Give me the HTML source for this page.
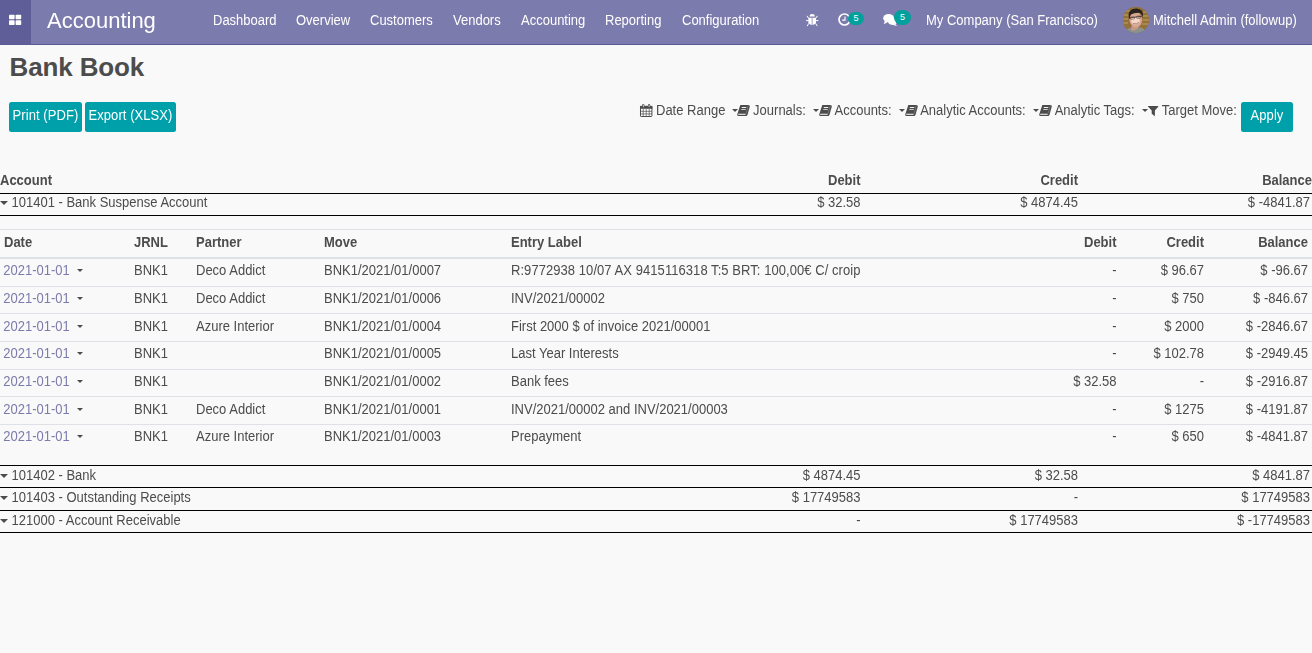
<!DOCTYPE html>
<html><head><meta charset="utf-8"><title>Bank Book</title>
<style>
*{box-sizing:border-box}
html,body{margin:0;padding:0}
body{width:1312px;height:653px;overflow:hidden;background:#f9f9f9;font-family:"Liberation Sans",sans-serif;font-size:13px;color:#4c4c4c;position:relative}
.nav{position:absolute;left:0;top:0;width:1312px;height:45px;background:#7c7bad;border-bottom:1px solid #5b5996;color:#fff}
.apps{position:absolute;left:0;top:0;width:31px;height:44px;background:#605e98}
.nav span.t{position:absolute;white-space:nowrap;color:#fff}
.brand{left:47px;top:8px;font-size:22px;line-height:26px;transform:scaleY(1.035);transform-origin:0 20px}
.mi{top:13px;font-size:13px;line-height:16px;transform:scaleY(1.08);transform-origin:0 12px}
h1{position:absolute;left:9.6px;top:51px;margin:0;font-size:26px;line-height:32px;font-weight:bold;color:#4c4c4c;letter-spacing:-0.15px}
.btn{position:absolute;background:#00a0ab;color:#fff;border-radius:2.5px;font-size:13px;line-height:16px;text-align:center;white-space:nowrap}
.t13{position:absolute;font-size:13px;line-height:16px;white-space:nowrap;color:#4c4c4c;transform:scaleY(1.08);transform-origin:0 12px}
.bt{display:inline-block;letter-spacing:0.07px;transform:scaleY(1.08);transform-origin:0 12px}
.b{font-weight:bold}
.r{text-align:right}
.hl{position:absolute;left:0;width:1312px;height:1px;background:#000}
.gl{position:absolute;left:0;width:1312px;background:#dee2e6}
.lk{color:#7c7bad}
.car{position:absolute;width:0;height:0;border-left:3px solid transparent;border-right:3px solid transparent;border-top:3px solid #4c4c4c}
.carb{position:absolute;width:0;height:0;border-left:4.1px solid transparent;border-right:4.1px solid transparent;border-top:4.6px solid #4c4c4c}
.badge{position:absolute;background:#00a09d;color:#fff;border-radius:8px;text-align:center;font-weight:normal}
svg{position:absolute;overflow:visible}
</style></head><body>
<div class="nav">
 <div class="apps"><svg width="31" height="44" viewBox="0 0 31 44"><g fill="#fff"><rect x="9" y="14.7" width="5.6" height="4.6" rx="0.7"/><rect x="15.6" y="14.7" width="5.6" height="4.6" rx="0.7"/><rect x="9" y="20.3" width="5.6" height="4.6" rx="0.7"/><rect x="15.6" y="20.3" width="5.6" height="4.6" rx="0.7"/></g></svg></div>
 <span class="t brand">Accounting</span>
 <span class="t mi" style="left:213px">Dashboard</span>
 <span class="t mi" style="left:296px">Overview</span>
 <span class="t mi" style="left:370px">Customers</span>
 <span class="t mi" style="left:453px">Vendors</span>
 <span class="t mi" style="left:521px">Accounting</span>
 <span class="t mi" style="left:605px">Reporting</span>
 <span class="t mi" style="left:682px">Configuration</span>
 <span class="t mi" style="left:926px">My Company (San Francisco)</span>
 <span class="t mi" style="left:1153px">Mitchell Admin (followup)</span>

 <svg style="left:805.8px;top:13.8px" width="12.4" height="12.4" viewBox="0 0 12.4 12.4"><g fill="#fff" stroke="none"><path d="M3.6 2.4 A2.55 2.3 0 0 1 8.8 2.4 Z"/><path d="M2.4 3.7 H5.75 V11 Q3.3 10.9 2.4 8.6 Z"/><path d="M6.45 3.7 H10 V8.6 Q9.1 10.9 6.45 11 Z"/></g><g stroke="#fff" stroke-width="1" stroke-linecap="round" fill="none"><path d="M2.6 4.3 L1.2 2.2"/><path d="M9.8 4.3 L11.2 2.2"/><path d="M0.4 6.6 H2.6"/><path d="M9.8 6.6 H12"/><path d="M2.7 9.6 L1.3 11.8"/><path d="M9.7 9.6 L11.1 11.8"/></g></svg>
 <svg style="left:837.6px;top:12.9px" width="13" height="13" viewBox="0 0 13 13"><circle cx="6.5" cy="6.5" r="5.5" fill="none" stroke="#fff" stroke-width="1.7"/><path d="M7 3.6 V7.1 H4.2" fill="none" stroke="#fff" stroke-width="1.1"/></svg>
 <div class="badge" style="left:848px;top:11.6px;width:16px;height:13.4px;font-size:9px;line-height:12px">5</div>
 <svg style="left:883.4px;top:13.8px" width="14.6" height="12.2" viewBox="0 0 14.6 12.2"><g fill="#fff"><ellipse cx="5.6" cy="4.2" rx="5.4" ry="4.1"/><path d="M1.6 6.3 Q2 8.6 0.6 9.9 Q3.2 9.6 4.6 7.9 Z"/><ellipse cx="9.6" cy="7.6" rx="4.4" ry="3.3" /><path d="M12.2 9.6 Q12.4 11 14.2 12 Q11.4 11.9 9.8 10.6 Z"/></g></svg>
 <div class="badge" style="left:894.2px;top:9.9px;width:16.6px;height:15px;font-size:9px;line-height:14px">5</div>
<svg style="left:1123px;top:6.8px" width="26" height="26" viewBox="0 0 26 26"><defs><clipPath id="av"><circle cx="13" cy="13" r="13"/></clipPath><filter id="bl" x="-20%" y="-20%" width="140%" height="140%"><feGaussianBlur stdDeviation="0.6"/></filter></defs><g clip-path="url(#av)"><rect width="26" height="26" fill="#8f6a35"/><g filter="url(#bl)"><rect x="-2" y="-2" width="30" height="30" fill="#94703a"/><g fill="#c2a060"><rect x="-2" y="7.5" width="8" height="1" /><rect x="-2" y="11.5" width="7" height="1"/><rect x="-2" y="15.5" width="7" height="1"/><rect x="19" y="8.5" width="9" height="1"/><rect x="19.5" y="12.5" width="9" height="1"/><rect x="19" y="16.5" width="9" height="1"/><rect x="20" y="4.5" width="6" height="1"/><rect x="2" y="3.5" width="5" height="1"/></g><path d="M3 28 V23 Q6 20.5 9 20.5 L18 20.5 Q21 21.5 23 24 V28 Z" fill="#8c928c"/><path d="M8.5 19 L8 23 Q11 24.5 15 21.5 L15.5 18 Z" fill="#c99683"/><g transform="rotate(-8 12.5 12)"><ellipse cx="12.6" cy="12.6" rx="6.3" ry="7.8" fill="#d9a893"/><path d="M6.2 10.6 Q5.2 4 10.6 2 Q17.2 0.4 20.2 5 Q21.2 8 19.8 11.4 Q19.4 7.6 17.4 6.4 Q12 5.4 8.6 7 Q7.2 8.4 7.2 11 Z" fill="#2a211e"/><ellipse cx="12.2" cy="14" rx="4.2" ry="3.6" fill="#f3d6c8"/><rect x="6.8" y="9.7" width="12.4" height="0.9" rx="0.4" fill="#4d3d38"/><rect x="7.4" y="9.4" width="4.4" height="2.4" rx="1" fill="none" stroke="#4d3d38" stroke-width="0.45"/><rect x="13.6" y="9.4" width="4.4" height="2.4" rx="1" fill="none" stroke="#4d3d38" stroke-width="0.45"/><path d="M9.4 16.2 Q12.4 18.8 15.4 16 Q12.4 17 9.4 16.2Z" fill="#fff" stroke="#b8746a" stroke-width="0.6"/></g></g></g></svg>


</div>
<h1>Bank Book</h1>
<div class="btn" style="left:9px;top:102px;width:73px;height:30px;padding-top:6px"><span class="bt">Print (PDF)</span></div>
<div class="btn" style="left:85px;top:102px;width:91px;height:30px;padding-top:6px"><span class="bt">Export (XLSX)</span></div>
<div class="btn" style="left:1241px;top:102px;width:52px;height:30px;padding-top:6px"><span class="bt">Apply</span></div>
<span class="t13" style="left:656.0px;top:103px">Date Range</span>
<span class="t13" style="left:753.1px;top:103px">Journals:</span>
<span class="t13" style="left:834.5px;top:103px">Accounts:</span>
<span class="t13" style="left:920.2px;top:103px">Analytic Accounts:</span>
<span class="t13" style="left:1054.7px;top:103px">Analytic Tags:</span>
<span class="t13" style="left:1161.7px;top:103px">Target Move:</span>
<i class="car" style="left:732.4px;top:109px"></i>
<i class="car" style="left:813.3px;top:109px"></i>
<i class="car" style="left:899.2px;top:109px"></i>
<i class="car" style="left:1033.3px;top:109px"></i>
<i class="car" style="left:1142.1px;top:109px"></i>

<svg style="left:640px;top:103.8px" width="12.4" height="13" viewBox="0 0 12.4 13"><rect x="0.5" y="2.4" width="11.4" height="10.1" rx="0.6" fill="#fff" stroke="#4c4c4c" stroke-width="1"/><rect x="0" y="1.9" width="12.4" height="2.9" fill="#4c4c4c"/><g stroke="#4c4c4c" stroke-width="0.7"><path d="M3.2 4.8 V12.5 M6.2 4.8 V12.5 M9.2 4.8 V12.5 M0.5 7.3 H11.9 M0.5 9.9 H11.9"/></g><rect x="2.2" y="0" width="2.2" height="3.8" rx="1" fill="#4c4c4c"/><rect x="8" y="0" width="2.2" height="3.8" rx="1" fill="#4c4c4c"/><rect x="2.9" y="0.6" width="0.8" height="2.6" rx="0.4" fill="#eee"/><rect x="8.7" y="0.6" width="0.8" height="2.6" rx="0.4" fill="#eee"/></svg>
<svg style="left:736.9px;top:104.9px" width="13.2" height="11" viewBox="0 0 13.2 11"><path d="M3.3 0 H11.4 Q12.4 0.1 12.9 1.2 L10.6 9.4 Q10.2 10.9 8.9 11 H1.2 Q0 10.8 0.2 9.4 Z" fill="#4c4c4c"/><path d="M1.4 8.7 H8.8 L8.5 9.7 H1.1 Z" fill="#fff"/><path d="M4.9 2 H9.4 L9.15 2.9 H4.65 Z M4.4 3.9 H8.9 L8.65 4.8 H4.15 Z" fill="#f2f2f2"/><path d="M11.4 0.5 L9.1 8.4" stroke="#9a9a9a" stroke-width="0.5" fill="none"/></svg>
<svg style="left:818.6px;top:104.9px" width="13.2" height="11" viewBox="0 0 13.2 11"><path d="M3.3 0 H11.4 Q12.4 0.1 12.9 1.2 L10.6 9.4 Q10.2 10.9 8.9 11 H1.2 Q0 10.8 0.2 9.4 Z" fill="#4c4c4c"/><path d="M1.4 8.7 H8.8 L8.5 9.7 H1.1 Z" fill="#fff"/><path d="M4.9 2 H9.4 L9.15 2.9 H4.65 Z M4.4 3.9 H8.9 L8.65 4.8 H4.15 Z" fill="#f2f2f2"/><path d="M11.4 0.5 L9.1 8.4" stroke="#9a9a9a" stroke-width="0.5" fill="none"/></svg>
<svg style="left:904.6px;top:104.9px" width="13.2" height="11" viewBox="0 0 13.2 11"><path d="M3.3 0 H11.4 Q12.4 0.1 12.9 1.2 L10.6 9.4 Q10.2 10.9 8.9 11 H1.2 Q0 10.8 0.2 9.4 Z" fill="#4c4c4c"/><path d="M1.4 8.7 H8.8 L8.5 9.7 H1.1 Z" fill="#fff"/><path d="M4.9 2 H9.4 L9.15 2.9 H4.65 Z M4.4 3.9 H8.9 L8.65 4.8 H4.15 Z" fill="#f2f2f2"/><path d="M11.4 0.5 L9.1 8.4" stroke="#9a9a9a" stroke-width="0.5" fill="none"/></svg>
<svg style="left:1039.0px;top:104.9px" width="13.2" height="11" viewBox="0 0 13.2 11"><path d="M3.3 0 H11.4 Q12.4 0.1 12.9 1.2 L10.6 9.4 Q10.2 10.9 8.9 11 H1.2 Q0 10.8 0.2 9.4 Z" fill="#4c4c4c"/><path d="M1.4 8.7 H8.8 L8.5 9.7 H1.1 Z" fill="#fff"/><path d="M4.9 2 H9.4 L9.15 2.9 H4.65 Z M4.4 3.9 H8.9 L8.65 4.8 H4.15 Z" fill="#f2f2f2"/><path d="M11.4 0.5 L9.1 8.4" stroke="#9a9a9a" stroke-width="0.5" fill="none"/></svg>
<svg style="left:1147.8px;top:105.7px" width="10.4" height="10.3" viewBox="0 0 10.4 10.3"><path d="M0.2 0 H10.2 Q10.6 0.3 10.2 0.7 L6.9 4.5 V10.2 L3.7 7.7 V4.5 L0.2 0.7 Q-0.2 0.3 0.2 0 Z" fill="#4c4c4c"/></svg>
<span class="t13 b" style="left:0px;top:173px">Account</span>
<span class="t13 b r" style="right:451.5px;top:173px">Debit</span>
<span class="t13 b r" style="right:234px;top:173px">Credit</span>
<span class="t13 b r" style="right:0px;top:173px">Balance</span>
<div class="hl" style="top:193px"></div><div class="hl" style="top:215px"></div>
<i class="carb" style="left:-0.3px;top:200.5px"></i><span class="t13" style="left:11.5px;top:195px">101401 - Bank Suspense Account</span><span class="t13 r" style="right:451.5px;top:195px">$ 32.58</span><span class="t13 r" style="right:234px;top:195px">$ 4874.45</span><span class="t13 r" style="right:2px;top:195px">$ -4841.87</span>
<div class="gl" style="top:229px;height:1px"></div><div class="gl" style="top:257px;height:2px"></div>
<span class="t13 b" style="left:4px;top:235px">Date</span><span class="t13 b" style="left:134px;top:235px">JRNL</span><span class="t13 b" style="left:196px;top:235px">Partner</span><span class="t13 b" style="left:324px;top:235px">Move</span><span class="t13 b" style="left:511px;top:235px">Entry Label</span><span class="t13 b r" style="right:195.5px;top:235px">Debit</span><span class="t13 b r" style="right:108px;top:235px">Credit</span><span class="t13 b r" style="right:4px;top:235px">Balance</span>
<div class="gl" style="top:286px;height:1px"></div><div class="gl" style="top:313px;height:1px"></div><div class="gl" style="top:341px;height:1px"></div><div class="gl" style="top:369px;height:1px"></div><div class="gl" style="top:396px;height:1px"></div><div class="gl" style="top:424px;height:1px"></div>
<span class="t13 lk" style="left:3.3px;top:263px">2021-01-01</span><i class="car" style="left:77.4px;top:269.2px"></i><span class="t13" style="left:134px;top:263px">BNK1</span><span class="t13" style="left:196px;top:263px">Deco Addict</span><span class="t13" style="left:324px;top:263px">BNK1/2021/01/0007</span><span class="t13" style="left:511px;top:263px;letter-spacing:0.06px">R:9772938 10/07 AX 9415116318 T:5 BRT: 100,00€ C/ croip</span><span class="t13 r" style="right:195.5px;top:263px">-</span><span class="t13 r" style="right:108px;top:263px">$ 96.67</span><span class="t13 r" style="right:4px;top:263px">$ -96.67</span>
<span class="t13 lk" style="left:3.3px;top:291px">2021-01-01</span><i class="car" style="left:77.4px;top:297.2px"></i><span class="t13" style="left:134px;top:291px">BNK1</span><span class="t13" style="left:196px;top:291px">Deco Addict</span><span class="t13" style="left:324px;top:291px">BNK1/2021/01/0006</span><span class="t13" style="left:511px;top:291px">INV/2021/00002</span><span class="t13 r" style="right:195.5px;top:291px">-</span><span class="t13 r" style="right:108px;top:291px">$ 750</span><span class="t13 r" style="right:4px;top:291px">$ -846.67</span>
<span class="t13 lk" style="left:3.3px;top:319px">2021-01-01</span><i class="car" style="left:77.4px;top:325.2px"></i><span class="t13" style="left:134px;top:319px">BNK1</span><span class="t13" style="left:196px;top:319px">Azure Interior</span><span class="t13" style="left:324px;top:319px">BNK1/2021/01/0004</span><span class="t13" style="left:511px;top:319px">First 2000 $ of invoice 2021/00001</span><span class="t13 r" style="right:195.5px;top:319px">-</span><span class="t13 r" style="right:108px;top:319px">$ 2000</span><span class="t13 r" style="right:4px;top:319px">$ -2846.67</span>
<span class="t13 lk" style="left:3.3px;top:346px">2021-01-01</span><i class="car" style="left:77.4px;top:352.2px"></i><span class="t13" style="left:134px;top:346px">BNK1</span><span class="t13" style="left:324px;top:346px">BNK1/2021/01/0005</span><span class="t13" style="left:511px;top:346px">Last Year Interests</span><span class="t13 r" style="right:195.5px;top:346px">-</span><span class="t13 r" style="right:108px;top:346px">$ 102.78</span><span class="t13 r" style="right:4px;top:346px">$ -2949.45</span>
<span class="t13 lk" style="left:3.3px;top:374px">2021-01-01</span><i class="car" style="left:77.4px;top:380.2px"></i><span class="t13" style="left:134px;top:374px">BNK1</span><span class="t13" style="left:324px;top:374px">BNK1/2021/01/0002</span><span class="t13" style="left:511px;top:374px">Bank fees</span><span class="t13 r" style="right:195.5px;top:374px">$ 32.58</span><span class="t13 r" style="right:108px;top:374px">-</span><span class="t13 r" style="right:4px;top:374px">$ -2916.87</span>
<span class="t13 lk" style="left:3.3px;top:402px">2021-01-01</span><i class="car" style="left:77.4px;top:408.2px"></i><span class="t13" style="left:134px;top:402px">BNK1</span><span class="t13" style="left:196px;top:402px">Deco Addict</span><span class="t13" style="left:324px;top:402px">BNK1/2021/01/0001</span><span class="t13" style="left:511px;top:402px">INV/2021/00002 and INV/2021/00003</span><span class="t13 r" style="right:195.5px;top:402px">-</span><span class="t13 r" style="right:108px;top:402px">$ 1275</span><span class="t13 r" style="right:4px;top:402px">$ -4191.87</span>
<span class="t13 lk" style="left:3.3px;top:429px">2021-01-01</span><i class="car" style="left:77.4px;top:435.2px"></i><span class="t13" style="left:134px;top:429px">BNK1</span><span class="t13" style="left:196px;top:429px">Azure Interior</span><span class="t13" style="left:324px;top:429px">BNK1/2021/01/0003</span><span class="t13" style="left:511px;top:429px">Prepayment</span><span class="t13 r" style="right:195.5px;top:429px">-</span><span class="t13 r" style="right:108px;top:429px">$ 650</span><span class="t13 r" style="right:4px;top:429px">$ -4841.87</span>
<div class="hl" style="top:465px"></div><div class="hl" style="top:487px"></div>
<i class="carb" style="left:-0.3px;top:473.5px"></i><span class="t13" style="left:11.5px;top:468px">101402 - Bank</span><span class="t13 r" style="right:451.5px;top:468px">$ 4874.45</span><span class="t13 r" style="right:234px;top:468px">$ 32.58</span><span class="t13 r" style="right:2px;top:468px">$ 4841.87</span>
<div class="hl" style="top:487px"></div><div class="hl" style="top:510px"></div>
<i class="carb" style="left:-0.3px;top:495.5px"></i><span class="t13" style="left:11.5px;top:490px">101403 - Outstanding Receipts</span><span class="t13 r" style="right:451.5px;top:490px">$ 17749583</span><span class="t13 r" style="right:234px;top:490px">-</span><span class="t13 r" style="right:2px;top:490px">$ 17749583</span>
<div class="hl" style="top:510px"></div><div class="hl" style="top:532px"></div>
<i class="carb" style="left:-0.3px;top:518.5px"></i><span class="t13" style="left:11.5px;top:513px">121000 - Account Receivable</span><span class="t13 r" style="right:451.5px;top:513px">-</span><span class="t13 r" style="right:234px;top:513px">$ 17749583</span><span class="t13 r" style="right:2px;top:513px">$ -17749583</span>
</body></html>
